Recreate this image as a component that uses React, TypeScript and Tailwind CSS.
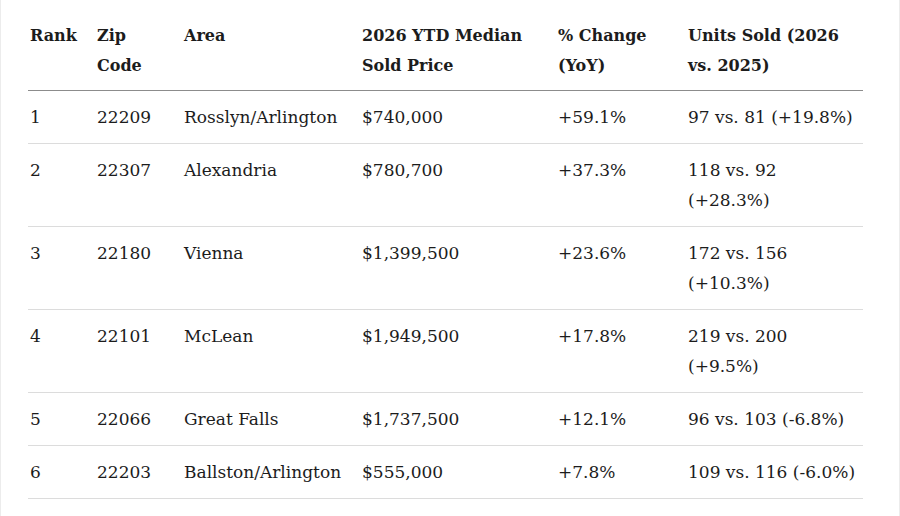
const cols = 'grid grid-cols-[67px_87px_178px_196px_130px_177px]';

const rows: { rank: string; zip: string; area: string; price: string; change: string; units: string[] }[] = [
  { rank: '1', zip: '22209', area: 'Rosslyn/Arlington', price: '$740,000', change: '+59.1%', units: ['97 vs. 81 (+19.8%)'] },
  { rank: '2', zip: '22307', area: 'Alexandria', price: '$780,700', change: '+37.3%', units: ['118 vs. 92', '(+28.3%)'] },
  { rank: '3', zip: '22180', area: 'Vienna', price: '$1,399,500', change: '+23.6%', units: ['172 vs. 156', '(+10.3%)'] },
  { rank: '4', zip: '22101', area: 'McLean', price: '$1,949,500', change: '+17.8%', units: ['219 vs. 200', '(+9.5%)'] },
  { rank: '5', zip: '22066', area: 'Great Falls', price: '$1,737,500', change: '+12.1%', units: ['96 vs. 103 (-6.8%)'] },
  { rank: '6', zip: '22203', area: 'Ballston/Arlington', price: '$555,000', change: '+7.8%', units: ['109 vs. 116 (-6.0%)'] },
];

function Lines({ lines }: { lines: string[] }) {
  return (
    <>
      {lines.map((l) => (
        <div key={l} className="whitespace-nowrap">{l}</div>
      ))}
    </>
  );
}

export default function App() {
  return (
    <div className="h-[516px] w-[900px] bg-white border-x border-[#ececec] text-[#1c1c1c] font-['DejaVu_Serif','Liberation_Serif',serif] leading-[30px]">
      <div className="ml-[27px] pt-[8px] w-[835px]">
        <div className={`${cols} pt-[13px] pb-[9px] text-[16px] font-bold border-b border-[#8c8c8c]`}>
          <div className="pl-[2px]"><Lines lines={['Rank']} /></div>
          <div className="pl-[2px]"><Lines lines={['Zip', 'Code']} /></div>
          <div className="pl-[2px]"><Lines lines={['Area']} /></div>
          <div className="pl-[2px]"><Lines lines={['2026 YTD Median', 'Sold Price']} /></div>
          <div className="pl-[2px]"><Lines lines={['% Change', '(YoY)']} /></div>
          <div className="pl-[2px]"><Lines lines={['Units Sold (2026', 'vs. 2025)']} /></div>
        </div>
        {rows.map((r) => (
          <div key={r.rank} className={`${cols} py-[11px] text-[17px] border-b border-[#dcdcdc]`}>
            <div className="pl-[2px]">{r.rank}</div>
            <div className="pl-[2px]">{r.zip}</div>
            <div className="pl-[2px] whitespace-nowrap">{r.area}</div>
            <div className="pl-[2px]">{r.price}</div>
            <div className="pl-[2px]">{r.change}</div>
            <div className="pl-[2px]"><Lines lines={r.units} /></div>
          </div>
        ))}
      </div>
    </div>
  );
}
